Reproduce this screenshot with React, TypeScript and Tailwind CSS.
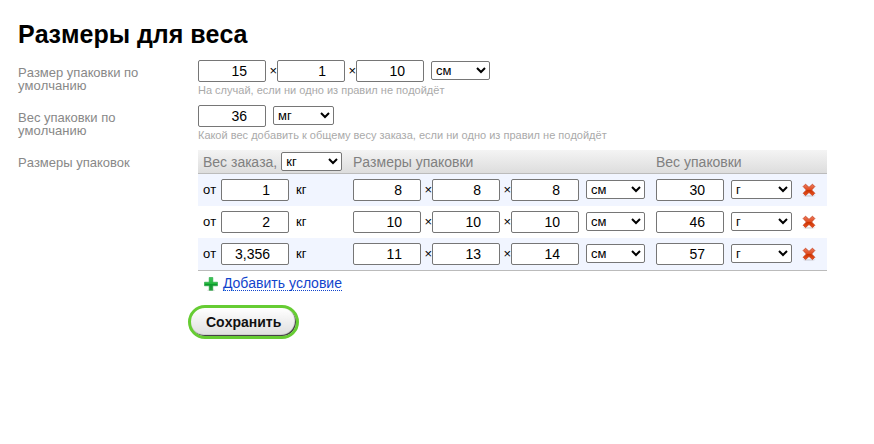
import { useId, useState } from "react";

type SelectProps = { label: string; value: string; options: string[]; wide?: boolean };

function NumberBox({ label, value, id }: { label: string; value: string; id?: string }) {
  return (
    <input
      id={id}
      type="text"
      inputMode="decimal"
      aria-label={label}
      defaultValue={value}
      className="h-[22px] w-[68px] shrink-0 rounded-[2px] border border-[#767676] bg-white pr-[18px] pl-[2px] text-right text-[14px] text-black"
    />
  );
}

function UnitSelect({ label, value, options, wide }: SelectProps) {
  return (
    <select
      aria-label={label}
      defaultValue={value}
      className={
        "mb-px h-[19px] shrink-0 rounded-[2px] border border-[#767676] bg-white text-[13px] text-black " +
        (wide ? "w-[61px]" : "w-[59px]")
      }
    >
      {options.map((o) => (
        <option key={o}>{o}</option>
      ))}
    </select>
  );
}

const WEIGHTS = ["мг", "г", "кг"];
const LENGTHS = ["мм", "см", "м"];

function Dimensions({ values, id }: { values: string[]; id?: string }) {
  return (
    <div className="flex items-center">
      {values.map((v, i) => (
        <div key={i} className="flex items-center">
          {i > 0 && <span className="w-[11px] text-right leading-4">×</span>}
          <NumberBox id={i === 0 ? id : undefined} label={["Длина", "Ширина", "Высота"][i]} value={v} />
        </div>
      ))}
      <div className="ml-[7px] flex">
        <UnitSelect label="Единица длины" value="см" options={LENGTHS} />
      </div>
    </div>
  );
}

function Weight({ value, unit, id }: { value: string; unit: string; id?: string }) {
  return (
    <div className="flex items-center gap-[7px]">
      <NumberBox id={id} label="Вес упаковки" value={value} />
      <UnitSelect label="Единица веса" value={unit} options={WEIGHTS} wide />
    </div>
  );
}

function CrossIcon() {
  return (
    <svg width="14" height="14" viewBox="0 0 14 14" aria-hidden="true">
      <defs>
        <linearGradient id="cross" x1="0" y1="0" x2="0" y2="1">
          <stop offset="0" stopColor="#ee7a5c" />
          <stop offset="0.5" stopColor="#e04a1c" />
          <stop offset="0.55" stopColor="#cc3300" />
          <stop offset="1" stopColor="#ee5522" />
        </linearGradient>
      </defs>
      <ellipse cx="7" cy="12.8" rx="6.5" ry="0.9" fill="#000" opacity="0.12" />
      <path
        d="M3.5 1.2 7 4.4l3.5-3.2 2.3 2.3L9.6 7l3.2 3.3-2.3 2.3L7 9.4l-3.5 3.2-2.3-2.3L4.4 7 1.2 3.5z"
        fill="url(#cross)"
        stroke="#c8421f"
        strokeWidth="0.9"
        strokeLinejoin="round"
      />
    </svg>
  );
}

function PlusIcon() {
  return (
    <svg width="14" height="14" viewBox="0 0 14 14" aria-hidden="true">
      <defs>
        <linearGradient id="plus" x1="0" y1="0" x2="0" y2="1">
          <stop offset="0" stopColor="#3fc65a" />
          <stop offset="0.48" stopColor="#22b83c" />
          <stop offset="0.52" stopColor="#0c9a2c" />
          <stop offset="1" stopColor="#2a9c3c" />
        </linearGradient>
      </defs>
      <ellipse cx="7" cy="13.2" rx="4" ry="0.7" fill="#000" opacity="0.15" />
      <path
        d="M5.2.5h3.6v4.7h4.7v3.6H8.8v4.5H5.2V8.8H.5V5.2h4.7z"
        fill="url(#plus)"
        stroke="#1ea53a"
        strokeWidth="0.6"
        strokeLinejoin="round"
      />
    </svg>
  );
}

function Field({ label, hint, children, id }: { label: string; hint: string; children: React.ReactNode; id: string }) {
  return (
    <div className="flex h-[45px]">
      <label htmlFor={id} className="w-[180px] shrink-0 pt-[6px] pr-[30px] leading-[13px] text-[#888]">
        {label}
      </label>
      <div className="min-w-0 flex-1">
        {children}
        <p className="text-[11px] leading-4 text-[#aaa]">{hint}</p>
      </div>
    </div>
  );
}

const START = [
  { id: 1, from: "1", dims: ["8", "8", "8"], weight: "30" },
  { id: 2, from: "2", dims: ["10", "10", "10"], weight: "46" },
  { id: 3, from: "3,356", dims: ["11", "13", "14"], weight: "57" },
];

export default function App() {
  const [rules, setRules] = useState(START);
  const sizeId = useId();
  const weightId = useId();

  const add = () =>
    setRules([...rules, { id: Date.now(), from: "", dims: ["", "", ""], weight: "" }]);

  return (
    <main className="bg-white pt-[18px] pr-[47px] pb-8 pl-[18px] font-['Liberation_Sans',Arial,sans-serif] text-[13px] text-black [font-kerning:none]">
      <h1 className="mb-[10px] text-[25px] leading-8 font-bold">Размеры для веса</h1>

      <Field id={sizeId} label="Размер упаковки по умолчанию" hint="На случай, если ни одно из правил не подойдёт">
        <Dimensions id={sizeId} values={["15", "1", "10"]} />
      </Field>
      <Field
        id={weightId}
        label="Вес упаковки по умолчанию"
        hint="Какой вес добавить к общему весу заказа, если ни одно из правил не подойдёт"
      >
        <Weight id={weightId} value="36" unit="мг" />
      </Field>

      <div className="flex">
        <div className="w-[180px] shrink-0 pt-[6px] leading-[13px] text-[#888]">Размеры упаковок</div>
        <div className="min-w-0 flex-1">
          <table
            className="w-full table-fixed border-separate border-spacing-0 border-b border-[#bbb] text-left"
            aria-label="Размеры упаковок"
          >
            <colgroup>
              <col className="w-[150px]" />
              <col className="w-[303px]" />
              <col className="w-[146px]" />
              <col />
            </colgroup>
            <thead>
              <tr className="h-6 bg-linear-to-b from-[#f4f4f4] to-[#dcdcdc] text-[14px] text-[#808080]">
                <th className="border-b border-[#bbb] py-0 pl-[5px] font-normal">
                  <div className="flex items-center gap-1">
                    <span className="leading-4">Вес заказа,</span>
                    <UnitSelect label="Единица веса заказа" value="кг" options={WEIGHTS} wide />
                  </div>
                </th>
                <th className="border-b border-[#bbb] py-0 pl-[5px] leading-4 font-normal">Размеры упаковки</th>
                <th className="border-b border-[#bbb] py-0 pl-[5px] leading-4 font-normal">Вес упаковки</th>
                <td className="border-b border-[#bbb]" />
              </tr>
            </thead>
            <tbody>
              {rules.map((r) => (
                <tr key={r.id} className="h-8 odd:bg-[#f1f5ff]">
                  <td className="pl-[5px]">
                    <div className="flex items-center">
                      <span className="w-[18px]">от</span>
                      <NumberBox label="Вес заказа от" value={r.from} />
                      <span className="ml-[7px]">кг</span>
                    </div>
                  </td>
                  <td className="pl-[5px]">
                    <Dimensions values={r.dims} />
                  </td>
                  <td className="pl-[5px]">
                    <Weight value={r.weight} unit="г" />
                  </td>
                  <td className="pl-[5px]">
                    <button
                      type="button"
                      aria-label="Удалить условие"
                      onClick={() => setRules(rules.filter((x) => x.id !== r.id))}
                      className="block cursor-pointer"
                    >
                      <CrossIcon />
                    </button>
                  </td>
                </tr>
              ))}
            </tbody>
          </table>

          <button type="button" onClick={add} className="mt-[5px] flex cursor-pointer items-center gap-[5px] pl-[6px]">
            <PlusIcon />
            <span className="border-b border-dotted border-[#1144cc] text-[14px] leading-[14px] text-[#1144cc]">
              Добавить условие
            </span>
          </button>

          <button
            type="submit"
            className="mt-[14px] -ml-[10px] h-[34px] cursor-pointer rounded-full border-3 border-[#66cc33] bg-linear-to-b from-white to-[#dedede] px-[15px] text-[14px] font-bold text-[#111] shadow-[inset_-1px_-1px_1px_#333]"
          >
            Сохранить
          </button>
        </div>
      </div>
    </main>
  );
}
